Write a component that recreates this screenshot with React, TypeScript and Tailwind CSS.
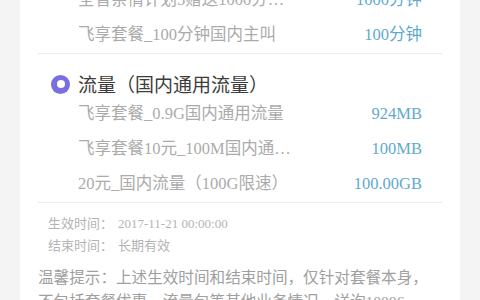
import React from "react";

type Item = { name: string; value: string };

const voiceItems: Item[] = [
  { name: "全省亲情计划5赠送1000分钟国内通话", value: "1000分钟" },
  { name: "飞享套餐_100分钟国内主叫", value: "100分钟" },
];

const dataItems: Item[] = [
  { name: "飞享套餐_0.9G国内通用流量", value: "924MB" },
  { name: "飞享套餐10元_100M国内通用流量", value: "100MB" },
  { name: "20元_国内流量（100G限速）", value: "100.00GB" },
];

const serif = "font-['Liberation_Serif','Noto_Sans_CJK_SC',serif]";

const Row: React.FC<{ item: Item }> = ({ item }) => (
  <div className={`flex items-center justify-between h-[35px] pl-[40px] pr-[20px] text-[16.5px] ${serif}`}>
    <span className="w-[217px] truncate text-[#ababab]">{item.name}</span>
    <span className="text-[#5fa9cf]">{item.value}</span>
  </div>
);

const App: React.FC = () => {
  return (
    <div className="h-[300px] w-[480px] overflow-hidden bg-[#f4f4f4]">
      <div className="mx-[20px] -mt-[17px] bg-white px-[18px] pb-6">
        <div className="border-b border-[#ececec]">
          {voiceItems.map((item) => (
            <Row key={item.name} item={item} />
          ))}
        </div>

        <div className="border-b border-[#ececec]">
          <div className="flex items-center gap-[8px] pt-[17px] pl-[13px] leading-[26px]">
            <span className="flex h-[19px] w-[19px] items-center justify-center rounded-full bg-[#7a6fe0]">
              <span className="h-[8px] w-[8px] rounded-full bg-white" />
            </span>
            <span className="text-[19px] text-[#3c3c3c] font-['Noto_Sans_CJK_SC',sans-serif]">
              流量（国内通用流量）
            </span>
          </div>
          {dataItems.map((item) => (
            <Row key={item.name} item={item} />
          ))}
        </div>

        <div className={`pt-[10px] pl-[10px] text-[13px] leading-[22px] text-[#b4b4b4] ${serif}`}>
          <div className="flex">
            <span className="w-[70px]">生效时间：</span>
            <span>2017-11-21 00:00:00</span>
          </div>
          <div className="flex">
            <span className="w-[70px]">结束时间：</span>
            <span>长期有效</span>
          </div>
        </div>

        <p className={`mt-[9px] text-[15.6px] leading-[24px] text-[#a0a0a0] ${serif}`}>
          温馨提示：上述生效时间和结束时间，仅针对套餐本身，不包括套餐优惠、流量包等其他业务情况，详询10086。
        </p>
      </div>
    </div>
  );
};

export default App;
